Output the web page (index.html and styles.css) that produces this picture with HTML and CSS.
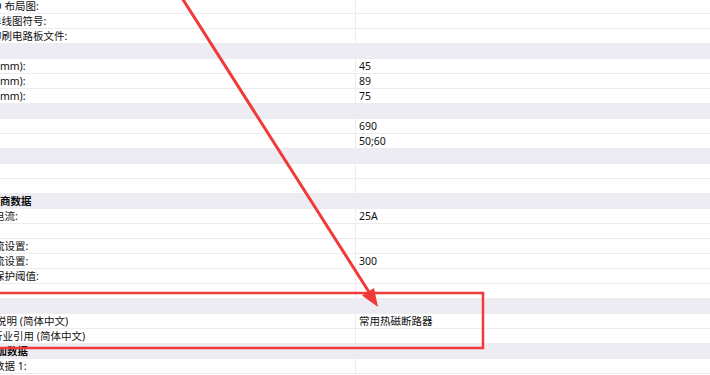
FILE: index.html
```html
<!DOCTYPE html>
<html lang="zh-CN">
<head>
<meta charset="utf-8">
<link rel="stylesheet" href="styles.css">
</head>
<body>
<div class="grid">
  <div class="row"><div class="k p28">3D 布局图:</div><div class="v"></div></div>
  <div class="row"><div class="k p31">单线图符号:</div><div class="v"></div></div>
  <div class="row"><div class="k p31">印刷电路板文件:</div><div class="v"></div></div>
  <div class="row cat"><div class="k"></div></div>
  <div class="row"><div class="k p13">宽度 (mm):</div><div class="v">45</div></div>
  <div class="row"><div class="k p13">高度 (mm):</div><div class="v">89</div></div>
  <div class="row"><div class="k p13">深度 (mm):</div><div class="v">75</div></div>
  <div class="row cat"><div class="k"></div></div>
  <div class="row"><div class="k"></div><div class="v">690</div></div>
  <div class="row"><div class="k"></div><div class="v">50;60</div></div>
  <div class="row cat"><div class="k"></div></div>
  <div class="row"><div class="k"></div><div class="v"></div></div>
  <div class="row"><div class="k"></div><div class="v"></div></div>
  <div class="row cat"><div class="k p19">制造商数据</div></div>
  <div class="row"><div class="k p13">额定电流:</div><div class="v">25A</div></div>
  <div class="row"><div class="k"></div><div class="v"></div></div>
  <div class="row"><div class="k p13">热电流设置:</div><div class="v"></div></div>
  <div class="row"><div class="k p13">磁电流设置:</div><div class="v">300</div></div>
  <div class="row"><div class="k p13">接地保护阈值:</div><div class="v"></div></div>
  <div class="row"><div class="k"></div><div class="v"></div></div>
  <div class="row cat"><div class="k"></div></div>
  <div class="row"><div class="k p15">产品说明 (简体中文)</div><div class="v">常用热磁断路器</div></div>
  <div class="row"><div class="k p32">行业引用 (简体中文)</div><div class="v"></div></div>
  <div class="row cat"><div class="k p26">附加数据</div></div>
  <div class="row"><div class="k p13">附加数据 1:</div><div class="v"></div></div>
</div>
<svg class="overlay" width="710" height="375" viewBox="0 0 710 375">
  <line x1="182" y1="-2" x2="369" y2="292" stroke="#f03a3a" stroke-width="3"/>
  <polygon points="378,307 362,295.5 374,288" fill="#f03a3a"/>
  <rect x="-5" y="293" width="488" height="55" fill="none" stroke="#f03a3a" stroke-width="2.5"/>
</svg>
</body>
</html>
```
FILE: styles.css
```css
html, body {
  margin: 0;
  padding: 0;
}
body {
  width: 710px;
  height: 375px;
  overflow: hidden;
  position: relative;
  background: #ffffff;
  font-family: "Noto Sans", "Noto Sans CJK SC", sans-serif;
  font-size: 10.5px;
  color: #111111;
}
.grid {
  margin-top: -1px;
  margin-left: -40px;
}
.row {
  display: flex;
  height: 14px;
  line-height: 14px;
  border-bottom: 1px solid #ebebf0;
}
.k {
  flex: 0 0 auto;
  box-sizing: border-box;
  width: 396px;
  padding-left: 31px;
  border-right: 1px solid #ebebf0;
  white-space: nowrap;
  overflow: hidden;
}
.p13 { padding-left: 13px; }
.p15 { padding-left: 15px; }
.p19 { padding-left: 19px; }
.p26 { padding-left: 26px; }
.p28 { padding-left: 28px; }
.p31 { padding-left: 31px; }
.p32 { padding-left: 32px; }
.v {
  padding-left: 3px;
  white-space: nowrap;
}
.cat {
  background: #ececf2;
}
.cat .k {
  border-right: none;
  font-weight: bold;
  color: #0a0a0a;
}
.overlay {
  position: absolute;
  left: 0;
  top: 0;
}
```
